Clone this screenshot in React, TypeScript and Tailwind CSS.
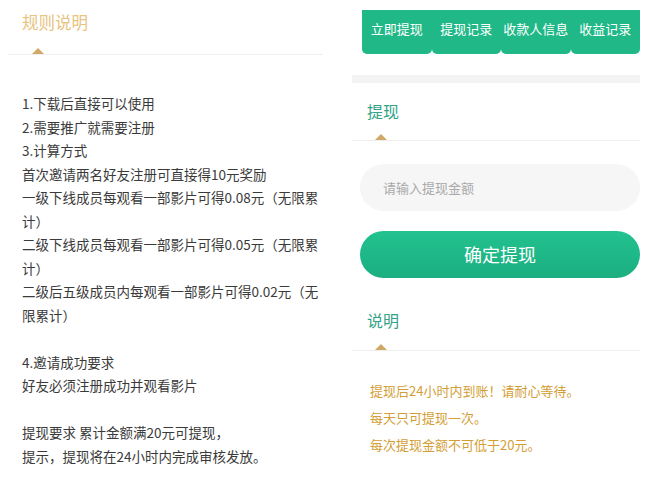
import React from "react";

const font = { fontFamily: '"Noto Sans CJK SC", "Noto Sans", sans-serif' };

const rules = [
  "1.下载后直接可以使用",
  "2.需要推广就需要注册",
  "3.计算方式",
  "首次邀请两名好友注册可直接得10元奖励",
  "一级下线成员每观看一部影片可得0.08元（无限累",
  "计）",
  "二级下线成员每观看一部影片可得0.05元（无限累",
  "计）",
  "二级后五级成员内每观看一部影片可得0.02元（无",
  "限累计）",
  "",
  "4.邀请成功要求",
  "好友必须注册成功并观看影片",
  "",
  "提现要求 累计金额满20元可提现，",
  "提示，提现将在24小时内完成审核发放。",
];

const tabs = ["立即提现", "提现记录", "收款人信息", "收益记录"];

const notes = ["提现后24小时内到账！请耐心等待。", "每天只可提现一次。", "每次提现金额不可低于20元。"];

// 小三角 + 分割线
function Marker({ left }: { left: string }) {
  return (
    <div className="relative h-[8px] border-b border-[#efefef]">
      <div
        className={`absolute bottom-0 ${left} w-0 h-0 border-l-[6px] border-r-[6px] border-b-[6px] border-l-transparent border-r-transparent border-b-[#d2a868]`}
      />
    </div>
  );
}

export default function App() {
  return (
    <div className="w-[650px] h-[487px] bg-white flex overflow-hidden" style={font}>
      {/* 左侧 规则说明 */}
      <div className="w-[330px] pl-[8px] pr-[7px] pt-[10px]">
        <div className="pl-[14px] text-[16.5px] leading-[24px] text-[#e8c382]">规则说明</div>
        <div className="h-[13px]" />
        <Marker left="left-[24px]" />
        <div className="pl-[14px] pt-[37px] text-[13.5px] leading-[23.5px] text-[#3a3a3a]">
          {rules.map((line, i) => (
            <div key={i} className="h-[23.5px] whitespace-nowrap">
              {line}
            </div>
          ))}
        </div>
      </div>

      {/* 右侧 提现 */}
      <div className="flex-1 pl-[22px] pr-[10px] pt-[10px]">
        <div className="flex h-[44px] ml-[10px]">
          {tabs.map((t) => (
            <div
              key={t}
              className="flex-1 flex items-center justify-center pb-[6px] bg-[#20b887] text-white text-[13px] rounded-b-[5px]"
            >
              {t}
            </div>
          ))}
        </div>

        <div className="mt-[21px] h-[8px] bg-[#f3f3f3]" />

        <div className="pl-[15px] pt-[16px] text-[16px] leading-[24px] text-[#33a386]">提现</div>
        <div className="h-[10px]" />
        <Marker left="left-[23px]" />

        <div className="ml-[8px] mt-[23px] h-[47px] rounded-full bg-[#f6f6f6] flex items-center pl-[23px] text-[13px] text-[#a9a9a9]">
          请输入提现金额
        </div>

        <button className="ml-[8px] mt-[20px] w-[280px] h-[47px] rounded-full bg-gradient-to-b from-[#22c28f] to-[#1cae80] text-white text-[18px] flex items-center justify-center">
          确定提现
        </button>

        <div className="pl-[15px] pt-[30px] text-[16px] leading-[24px] text-[#33a386]">说明</div>
        <div className="h-[11px]" />
        <Marker left="left-[23px]" />

        <div className="pl-[18px] pt-[26px] text-[13px] text-[#d39e35]">
          {notes.map((n) => (
            <div key={n} className="h-[27px] leading-[27px] whitespace-nowrap">
              {n}
            </div>
          ))}
        </div>
      </div>
    </div>
  );
}
